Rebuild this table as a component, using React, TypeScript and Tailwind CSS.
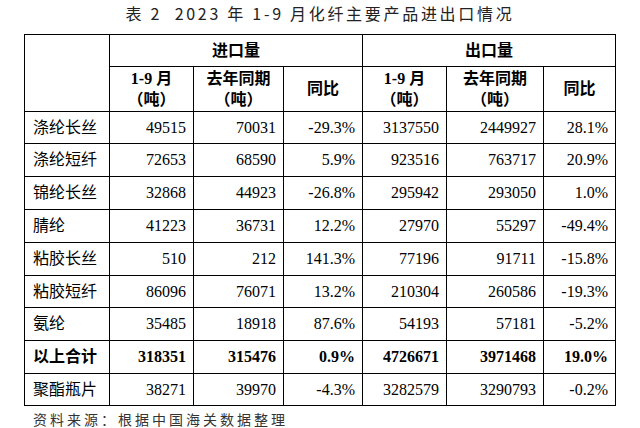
const rows = [
  { name: "涤纶长丝", v: ["49515", "70031", "-29.3%", "3137550", "2449927", "28.1%"] },
  { name: "涤纶短纤", v: ["72653", "68590", "5.9%", "923516", "763717", "20.9%"] },
  { name: "锦纶长丝", v: ["32868", "44923", "-26.8%", "295942", "293050", "1.0%"] },
  { name: "腈纶", v: ["41223", "36731", "12.2%", "27970", "55297", "-49.4%"] },
  { name: "粘胶长丝", v: ["510", "212", "141.3%", "77196", "91711", "-15.8%"] },
  { name: "粘胶短纤", v: ["86096", "76071", "13.2%", "210304", "260586", "-19.3%"] },
  { name: "氨纶", v: ["35485", "18918", "87.6%", "54193", "57181", "-5.2%"] },
  { name: "以上合计", v: ["318351", "315476", "0.9%", "4726671", "3971468", "19.0%"], bold: true },
  { name: "聚酯瓶片", v: ["38271", "39970", "-4.3%", "3282579", "3290793", "-0.2%"] },
];

function SubHead() {
  return (
    <>
      <div className="bg-white flex flex-col items-center justify-center font-bold leading-[21px]">
        <span>1-9 月</span>
        <span>（吨）</span>
      </div>
      <div className="bg-white flex flex-col items-center justify-center font-bold leading-[21px]">
        <span>去年同期</span>
        <span>（吨）</span>
      </div>
      <div className="bg-white flex items-center justify-center font-bold">同比</div>
    </>
  );
}

export default function App() {
  return (
    <div className="w-[640px] h-[428px] bg-white text-black font-['Liberation_Serif','Noto_Sans_CJK_SC',serif]">
      {/* Title */}
      <div className="h-[34px] pt-[3px] text-center text-[16px] leading-[20px] tracking-[2.7px] text-[#222] font-['Noto_Sans_CJK_SC',sans-serif]">
        表 2&nbsp;&nbsp;2023 年 1-9 月化纤主要产品进出口情况
      </div>

      {/* Table */}
      <div className="ml-[24px] w-[592px] grid grid-cols-[84px_83px_89px_78px_83px_96px_71px] grid-rows-[31px_44px_31px_32px_32px_32px_32px_31px_32px_32px_31px] gap-px p-px bg-black text-[16px]">
        <div className="bg-white row-span-2" />
        <div className="bg-white col-span-3 flex items-center justify-center font-bold">进口量</div>
        <div className="bg-white col-span-3 flex items-center justify-center font-bold">出口量</div>
        <SubHead />
        <SubHead />

        {rows.map((r) => (
          <div key={r.name} className="contents">
            <div className={`bg-white flex items-center pl-[8px] ${r.bold ? "font-bold" : ""}`}>{r.name}</div>
            {r.v.map((x, i) => (
              <div
                key={i}
                className={`bg-white flex items-center justify-end pr-[7px] ${r.bold ? "font-bold" : ""}`}
              >
                {x}
              </div>
            ))}
          </div>
        ))}
      </div>

      {/* Source */}
      <div className="mt-[5px] pl-[33px] text-[14px] leading-[16px] tracking-[3px] text-[#333] font-['Noto_Sans_CJK_SC',sans-serif]">
        资料来源：根据中国海关数据整理
      </div>
    </div>
  );
}
